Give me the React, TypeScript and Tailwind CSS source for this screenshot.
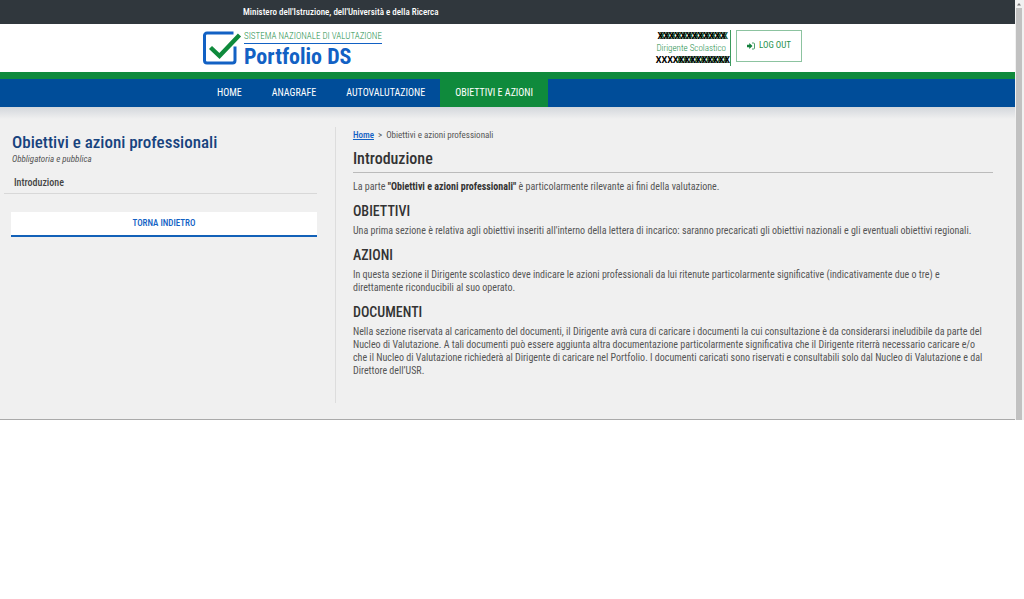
import type { ReactNode } from "react";

const navItems = [
  { label: "HOME", active: false },
  { label: "ANAGRAFE", active: false },
  { label: "AUTOVALUTAZIONE", active: false },
  { label: "OBIETTIVI E AZIONI", active: true },
];

function Logo() {
  return (
    <svg viewBox="0 0 40 36" className="h-9 w-10 shrink-0" fill="none" aria-hidden="true">
      <path
        d="M31.500 3H5a2.500 2.500 0 0 0-2.500 2.500v25A2.500 2.500 0 0 0 5 33h25.500a2.500 2.500 0 0 0 2.500-2.500V16.500"
        stroke="#1261c4"
        strokeWidth="3"
      />
      <path d="M8.500 17.500l9 8.500L37.500 5" stroke="#0f8a3c" strokeWidth="4.400" />
    </svg>
  );
}

function LoginIcon() {
  return (
    <svg viewBox="0 0 16 14" className="h-2 w-2 shrink-0" aria-hidden="true">
      <path d="M0 4.500h4.500V1L11 7l-6.500 6V9.500H0z" fill="#12803c" />
      <path d="M10 1h3a2 2 0 0 1 2 2v8a2 2 0 0 1-2 2h-3" fill="none" stroke="#12803c" strokeWidth="1.500" />
    </svg>
  );
}

function Section({ title, children }: { title: string; children: ReactNode }) {
  return (
    <section className="mt-2">
      <h3 className="text-[14px] leading-5 font-medium text-[#333]">{title}</h3>
      <p className="mt-[3px] pr-1 leading-[13px]">{children}</p>
    </section>
  );
}

function Header() {
  return (
    <header>
      <div className="h-6 bg-[#30373d]">
        <div className="mx-auto max-w-[613px] pl-[42px] text-[9px] leading-6 font-medium text-white">
          Ministero dell'Istruzione, dell'Università e della Ricerca
        </div>
      </div>
      <div className="h-12 bg-white">
        <div className="mx-auto flex max-w-[613px] items-start justify-between pt-1.5 pr-3">
          <a href="#" className="flex gap-0.5 pl-px">
            <Logo />
            <span className="block">
              <span className="block border-b border-b-[#1261c4] pb-px text-[9px] leading-3 font-light text-[#24904c]">
                SISTEMA NAZIONALE DI VALUTAZIONE
              </span>
              <span className="block text-[22px] leading-[26px] font-bold text-[#1261c4]">Portfolio DS</span>
            </span>
          </a>
          <div className="flex gap-[5px]">
            <div className="border-r border-r-[#3b9a5d] text-right text-[9px] leading-3 font-light text-[#24904c]">
              <div className="pr-1 font-['Roboto',sans-serif] font-bold text-black [text-shadow:2px_0_#14532d]">
                XXXXXXXXXXXX
              </div>
              <div className="pr-1">Dirigente Scolastico</div>
              <div className="font-['Roboto',sans-serif] font-bold text-black">
                XXXX<span className="[text-shadow:-2px_0_#14532d]">XXXXXXXXX</span>
              </div>
            </div>
            <button className="flex h-8 w-[66px] items-center justify-center gap-1 border border-[#8cc3a0] text-[9px] text-[#24904c]">
              <LoginIcon />
              LOG OUT
            </button>
          </div>
        </div>
      </div>
      <nav className="border-t-7 border-[#0f8a3c] bg-[#004d99]">
        <div className="mx-auto flex max-w-[613px] pl-px">
          {navItems.map((item) => (
            <a
              key={item.label}
              href="#"
              className={`px-[15px] text-[10px] leading-[28px] text-white ${item.active ? "bg-[#0f8a3c]" : ""}`}
            >
              {item.label}
            </a>
          ))}
        </div>
      </nav>
    </header>
  );
}

function Sidebar() {
  return (
    <aside className="w-[33%] shrink-0 pr-[18px]">
      <h1 className="pt-1 pl-3 text-[17px] leading-[22px] font-medium text-[#17437e]">
        Obiettivi e azioni professionali
      </h1>
      <p className="pl-3 text-[9px] leading-3 italic">Obbligatoria e pubblica</p>
      <a href="#" className="mt-2 ml-1 block border-b border-[#d8d8d8] pl-2.5 text-[10px] leading-5 font-medium text-[#444]">
        Introduzione
      </a>
      <div className="mt-[18px] ml-[11px]">
        <button className="block h-[25px] w-full border-b-2 border-[#1261b8] bg-white text-[9px] font-medium text-[#1261c4]">
          TORNA INDIETRO
        </button>
      </div>
    </aside>
  );
}

export default function App() {
  return (
    <div className="min-h-screen bg-white font-['Roboto_Condensed','Liberation_Sans_Narrow','Liberation_Sans',sans-serif] text-[10px] text-[#555]">
      <div className="flex">
        <div className="min-w-0 flex-1 border-b border-[#aaa] bg-[#f0f0f0]">
          <Header />
          <div className="h-3 bg-linear-to-b from-[#d3d7dc] to-[#f0f0f0]" />
          <div className="flex pt-2 pb-4">
            <Sidebar />
            <main className="min-w-0 flex-1 border-l border-[#ddd] pr-[22px] pb-[26px] pl-[17px]">
              <div className="text-[9px] leading-4">
                <a href="#" className="font-medium text-[#1261c4] underline">
                  Home
                </a>
                <span className="px-1">&gt;</span>
                Obiettivi e azioni professionali
              </div>
              <h2 className="mt-[6px] border-b border-[#bbb] pb-[3px] text-[16px] leading-5 font-medium text-[#333]">
                Introduzione
              </h2>
              <p className="mt-[7px] leading-[13px]">
                La parte <strong className="text-[#333]">"Obiettivi e azioni professionali"</strong> è particolarmente
                rilevante ai fini della valutazione.
              </p>
              <Section title="OBIETTIVI">
                Una prima sezione è relativa agli obiettivi inseriti all'interno della lettera di incarico: saranno
                precaricati gli obiettivi nazionali e gli eventuali obiettivi regionali.
              </Section>
              <Section title="AZIONI">
                In questa sezione il Dirigente scolastico deve indicare le azioni professionali da lui ritenute
                particolarmente significative (indicativamente due o tre) e direttamente riconducibili al suo operato.
              </Section>
              <Section title="DOCUMENTI">
                Nella sezione riservata al caricamento del documenti, il Dirigente avrà cura di caricare i documenti la
                cui consultazione è da considerarsi ineludibile da parte del Nucleo di Valutazione. A tali documenti può
                essere aggiunta altra documentazione particolarmente significativa che il Dirigente riterrà necessario
                caricare e/o che il Nucleo di Valutazione richiederà al Dirigente di caricare nel Portfolio. I documenti
                caricati sono riservati e consultabili solo dal Nucleo di Valutazione e dal Direttore dell’USR.
              </Section>
            </main>
          </div>
        </div>
        <div className="flex w-[9px] flex-col bg-[#f1f1f1] pr-0.5 pl-px">
          <svg viewBox="0 0 6 8" className="h-2 w-1.5 shrink-0" aria-hidden="true">
            <path d="M1 5.500L3 3l2 2.500z" fill="#777" />
          </svg>
          <div className="flex-1 bg-[#c1c1c1]" />
        </div>
      </div>
    </div>
  );
}
